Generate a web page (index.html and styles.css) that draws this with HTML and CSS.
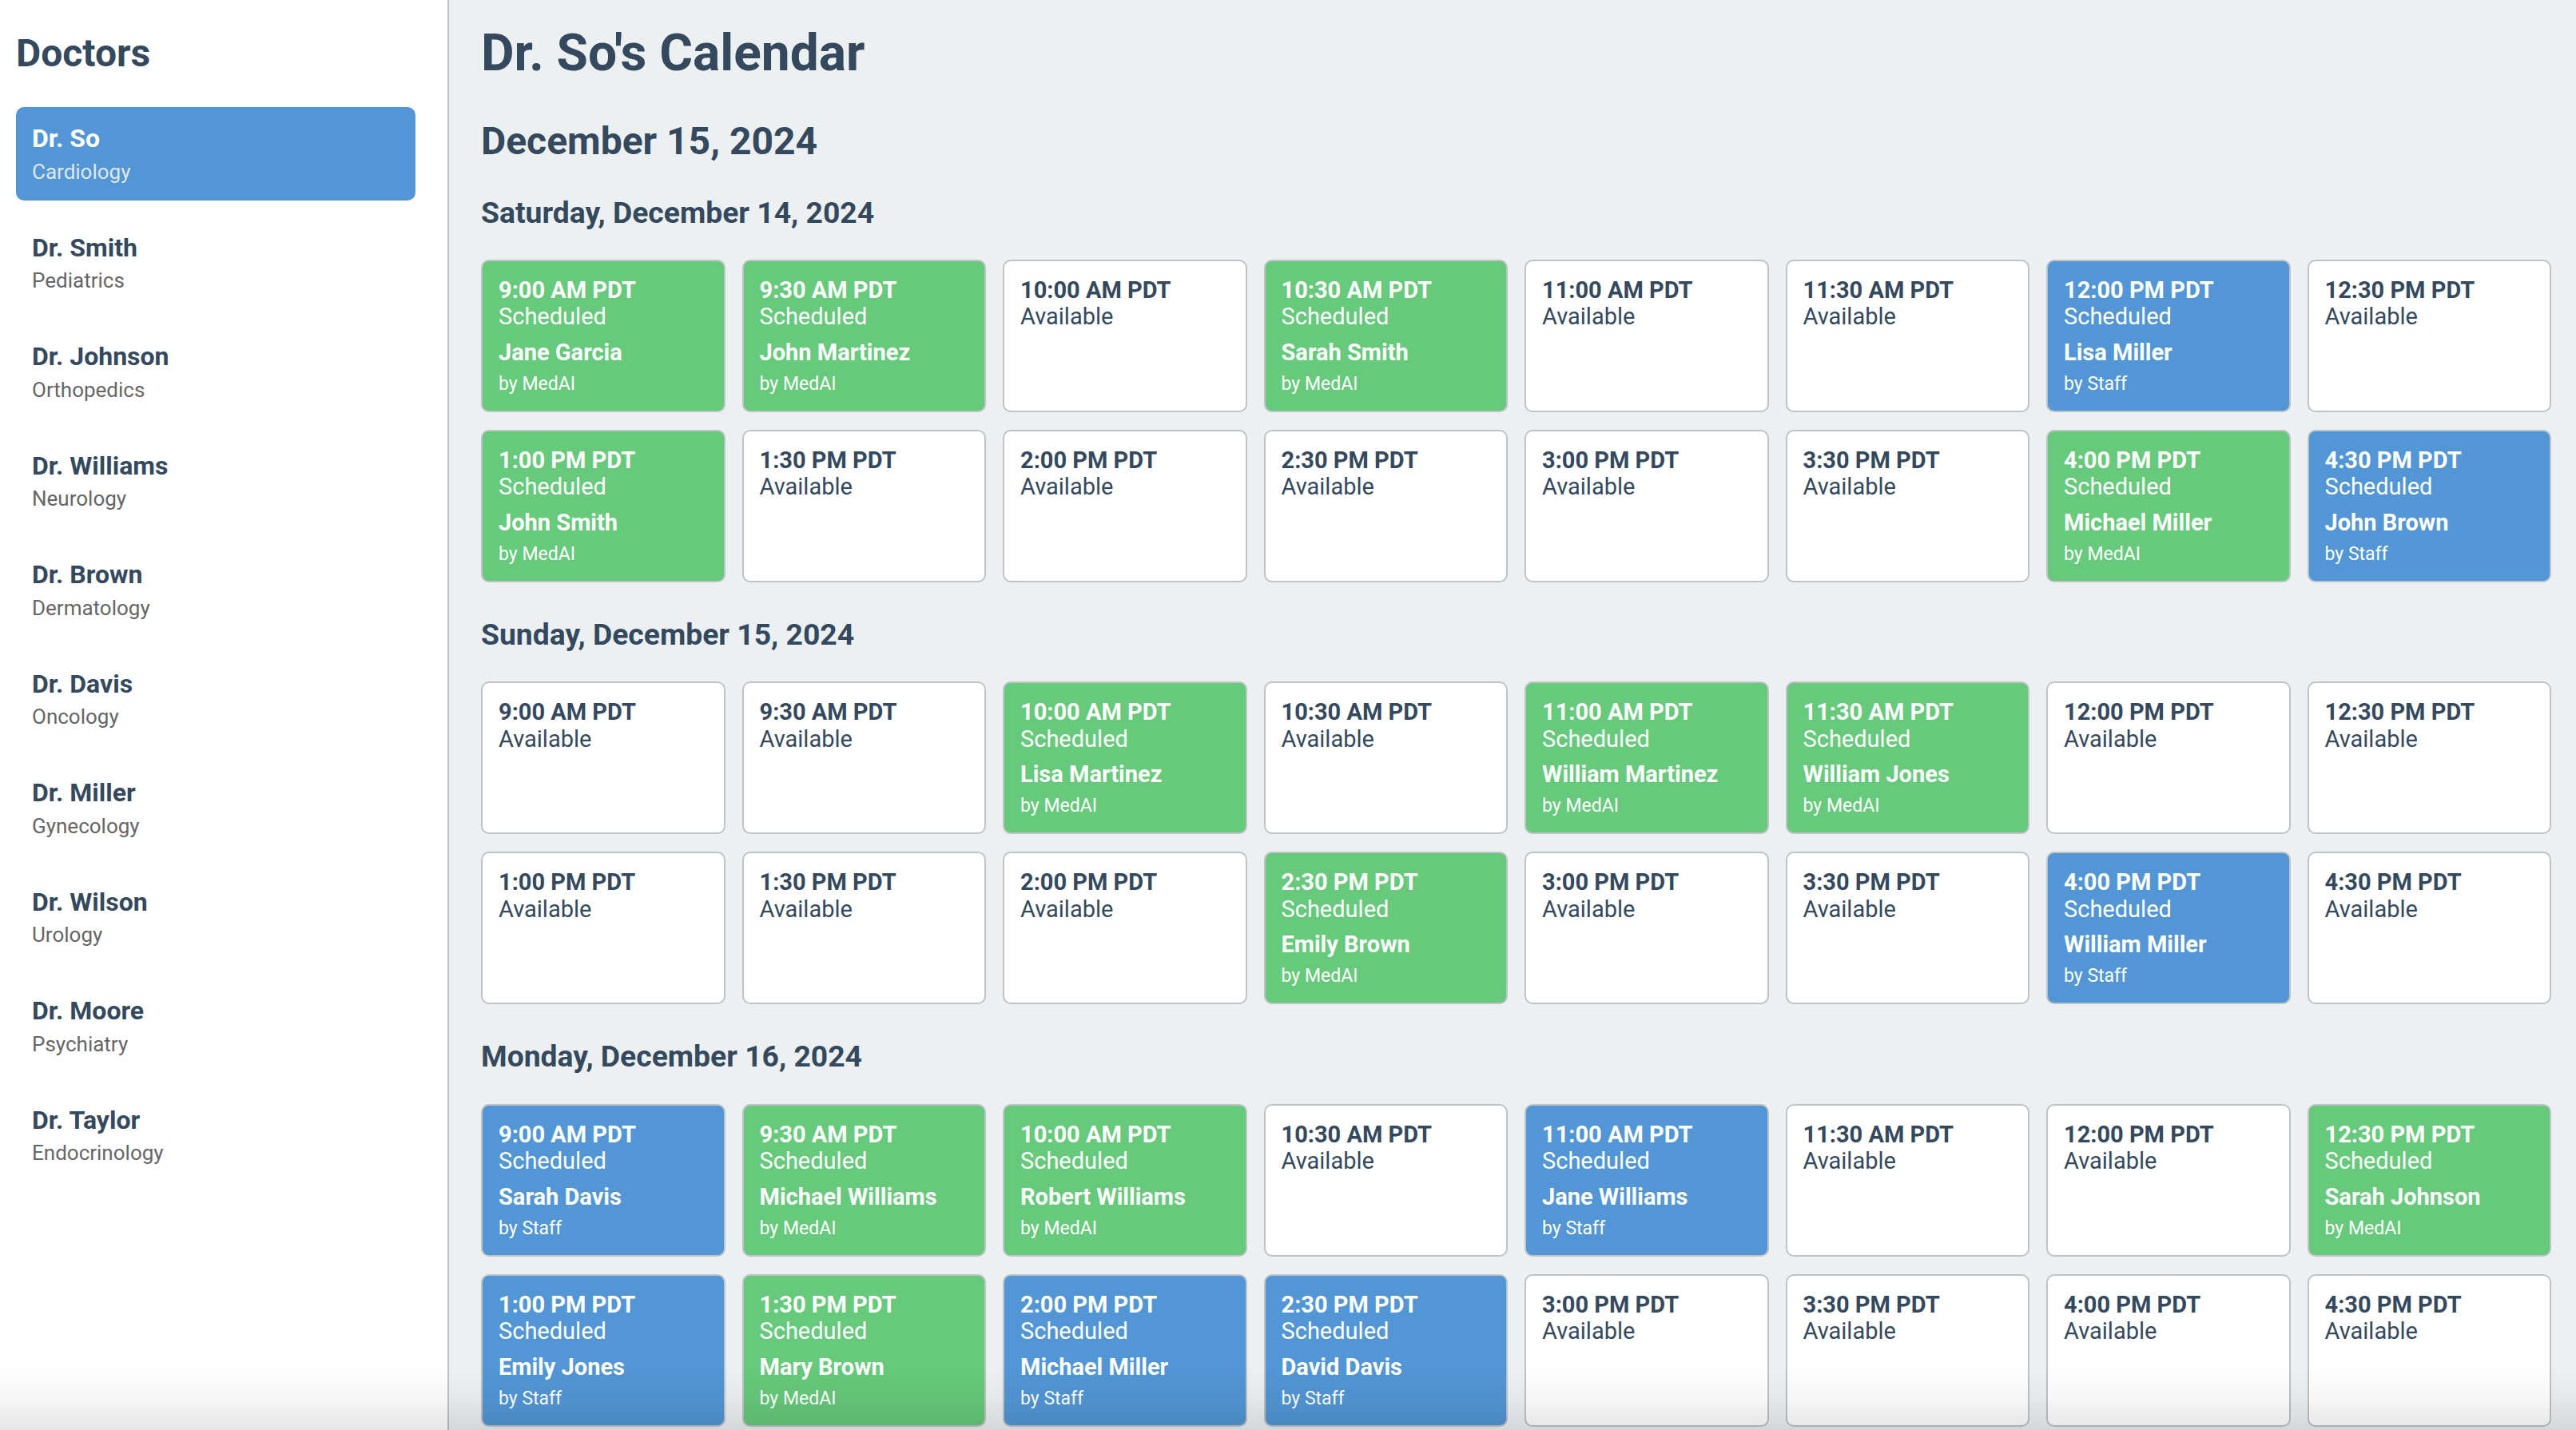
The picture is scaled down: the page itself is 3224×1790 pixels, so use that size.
FILE: index.html
```html
<!DOCTYPE html>
<html lang="en">
<head>
<meta charset="utf-8">
<title>Dr. So's Calendar</title>
<link rel="stylesheet" href="styles.css">
</head>
<body>
<div class="app">
  <aside class="sidebar">
    <h2 class="sidebar-title">Doctors</h2>
    <ul class="doctor-list">
      <li class="doctor active"><div class="doctor-name">Dr. So</div><div class="doctor-spec">Cardiology</div></li>
      <li class="doctor"><div class="doctor-name">Dr. Smith</div><div class="doctor-spec">Pediatrics</div></li>
      <li class="doctor"><div class="doctor-name">Dr. Johnson</div><div class="doctor-spec">Orthopedics</div></li>
      <li class="doctor"><div class="doctor-name">Dr. Williams</div><div class="doctor-spec">Neurology</div></li>
      <li class="doctor"><div class="doctor-name">Dr. Brown</div><div class="doctor-spec">Dermatology</div></li>
      <li class="doctor"><div class="doctor-name">Dr. Davis</div><div class="doctor-spec">Oncology</div></li>
      <li class="doctor"><div class="doctor-name">Dr. Miller</div><div class="doctor-spec">Gynecology</div></li>
      <li class="doctor"><div class="doctor-name">Dr. Wilson</div><div class="doctor-spec">Urology</div></li>
      <li class="doctor"><div class="doctor-name">Dr. Moore</div><div class="doctor-spec">Psychiatry</div></li>
      <li class="doctor"><div class="doctor-name">Dr. Taylor</div><div class="doctor-spec">Endocrinology</div></li>
    </ul>
  </aside>
  <main class="main">
    <h1 class="page-title">Dr. So's Calendar</h1>
    <h2 class="date-title">December 15, 2024</h2>

    <section class="day">
      <h3 class="day-title">Saturday, December 14, 2024</h3>
      <div class="slots">
        <div class="slot ai"><div class="time">9:00 AM PDT</div><div class="status">Scheduled</div><div class="patient">Jane Garcia</div><div class="by">by MedAI</div></div>
        <div class="slot ai"><div class="time">9:30 AM PDT</div><div class="status">Scheduled</div><div class="patient">John Martinez</div><div class="by">by MedAI</div></div>
        <div class="slot"><div class="time">10:00 AM PDT</div><div class="status">Available</div></div>
        <div class="slot ai"><div class="time">10:30 AM PDT</div><div class="status">Scheduled</div><div class="patient">Sarah Smith</div><div class="by">by MedAI</div></div>
        <div class="slot"><div class="time">11:00 AM PDT</div><div class="status">Available</div></div>
        <div class="slot"><div class="time">11:30 AM PDT</div><div class="status">Available</div></div>
        <div class="slot staff"><div class="time">12:00 PM PDT</div><div class="status">Scheduled</div><div class="patient">Lisa Miller</div><div class="by">by Staff</div></div>
        <div class="slot"><div class="time">12:30 PM PDT</div><div class="status">Available</div></div>
        <div class="slot ai"><div class="time">1:00 PM PDT</div><div class="status">Scheduled</div><div class="patient">John Smith</div><div class="by">by MedAI</div></div>
        <div class="slot"><div class="time">1:30 PM PDT</div><div class="status">Available</div></div>
        <div class="slot"><div class="time">2:00 PM PDT</div><div class="status">Available</div></div>
        <div class="slot"><div class="time">2:30 PM PDT</div><div class="status">Available</div></div>
        <div class="slot"><div class="time">3:00 PM PDT</div><div class="status">Available</div></div>
        <div class="slot"><div class="time">3:30 PM PDT</div><div class="status">Available</div></div>
        <div class="slot ai"><div class="time">4:00 PM PDT</div><div class="status">Scheduled</div><div class="patient">Michael Miller</div><div class="by">by MedAI</div></div>
        <div class="slot staff"><div class="time">4:30 PM PDT</div><div class="status">Scheduled</div><div class="patient">John Brown</div><div class="by">by Staff</div></div>
      </div>
    </section>

    <section class="day">
      <h3 class="day-title">Sunday, December 15, 2024</h3>
      <div class="slots">
        <div class="slot"><div class="time">9:00 AM PDT</div><div class="status">Available</div></div>
        <div class="slot"><div class="time">9:30 AM PDT</div><div class="status">Available</div></div>
        <div class="slot ai"><div class="time">10:00 AM PDT</div><div class="status">Scheduled</div><div class="patient">Lisa Martinez</div><div class="by">by MedAI</div></div>
        <div class="slot"><div class="time">10:30 AM PDT</div><div class="status">Available</div></div>
        <div class="slot ai"><div class="time">11:00 AM PDT</div><div class="status">Scheduled</div><div class="patient">William Martinez</div><div class="by">by MedAI</div></div>
        <div class="slot ai"><div class="time">11:30 AM PDT</div><div class="status">Scheduled</div><div class="patient">William Jones</div><div class="by">by MedAI</div></div>
        <div class="slot"><div class="time">12:00 PM PDT</div><div class="status">Available</div></div>
        <div class="slot"><div class="time">12:30 PM PDT</div><div class="status">Available</div></div>
        <div class="slot"><div class="time">1:00 PM PDT</div><div class="status">Available</div></div>
        <div class="slot"><div class="time">1:30 PM PDT</div><div class="status">Available</div></div>
        <div class="slot"><div class="time">2:00 PM PDT</div><div class="status">Available</div></div>
        <div class="slot ai"><div class="time">2:30 PM PDT</div><div class="status">Scheduled</div><div class="patient">Emily Brown</div><div class="by">by MedAI</div></div>
        <div class="slot"><div class="time">3:00 PM PDT</div><div class="status">Available</div></div>
        <div class="slot"><div class="time">3:30 PM PDT</div><div class="status">Available</div></div>
        <div class="slot staff"><div class="time">4:00 PM PDT</div><div class="status">Scheduled</div><div class="patient">William Miller</div><div class="by">by Staff</div></div>
        <div class="slot"><div class="time">4:30 PM PDT</div><div class="status">Available</div></div>
      </div>
    </section>

    <section class="day">
      <h3 class="day-title">Monday, December 16, 2024</h3>
      <div class="slots">
        <div class="slot staff"><div class="time">9:00 AM PDT</div><div class="status">Scheduled</div><div class="patient">Sarah Davis</div><div class="by">by Staff</div></div>
        <div class="slot ai"><div class="time">9:30 AM PDT</div><div class="status">Scheduled</div><div class="patient">Michael Williams</div><div class="by">by MedAI</div></div>
        <div class="slot ai"><div class="time">10:00 AM PDT</div><div class="status">Scheduled</div><div class="patient">Robert Williams</div><div class="by">by MedAI</div></div>
        <div class="slot"><div class="time">10:30 AM PDT</div><div class="status">Available</div></div>
        <div class="slot staff"><div class="time">11:00 AM PDT</div><div class="status">Scheduled</div><div class="patient">Jane Williams</div><div class="by">by Staff</div></div>
        <div class="slot"><div class="time">11:30 AM PDT</div><div class="status">Available</div></div>
        <div class="slot"><div class="time">12:00 PM PDT</div><div class="status">Available</div></div>
        <div class="slot ai"><div class="time">12:30 PM PDT</div><div class="status">Scheduled</div><div class="patient">Sarah Johnson</div><div class="by">by MedAI</div></div>
        <div class="slot staff"><div class="time">1:00 PM PDT</div><div class="status">Scheduled</div><div class="patient">Emily Jones</div><div class="by">by Staff</div></div>
        <div class="slot ai"><div class="time">1:30 PM PDT</div><div class="status">Scheduled</div><div class="patient">Mary Brown</div><div class="by">by MedAI</div></div>
        <div class="slot staff"><div class="time">2:00 PM PDT</div><div class="status">Scheduled</div><div class="patient">Michael Miller</div><div class="by">by Staff</div></div>
        <div class="slot staff"><div class="time">2:30 PM PDT</div><div class="status">Scheduled</div><div class="patient">David Davis</div><div class="by">by Staff</div></div>
        <div class="slot"><div class="time">3:00 PM PDT</div><div class="status">Available</div></div>
        <div class="slot"><div class="time">3:30 PM PDT</div><div class="status">Available</div></div>
        <div class="slot"><div class="time">4:00 PM PDT</div><div class="status">Available</div></div>
        <div class="slot"><div class="time">4:30 PM PDT</div><div class="status">Available</div></div>
      </div>
    </section>
  </main>
</div>
<div class="bottom-shade"></div>
</body>
</html>
```

FILE: styles.css
```css
* { box-sizing: border-box; }

html, body {
  margin: 0;
  height: 100%;
  overflow: hidden;
}

body {
  font-family: Roboto, "Liberation Sans", sans-serif;
  color: #34495e;
  background: #ecf0f1;
}

.app {
  display: flex;
  height: 100vh;
}

/* Sidebar */
.sidebar {
  flex: 0 0 562px;
  background: #ffffff;
  border-right: 2px solid #bdc3c7;
  padding: 20px 40px 20px 20px;
  overflow: hidden;
}

.sidebar-title {
  margin: 18px 0 39px;
  font-size: 48px;
  font-weight: 700;
  line-height: normal;
  color: #34495e;
}

.doctor-list {
  list-style: none;
  margin: 0;
  padding: 0;
  display: flex;
  flex-direction: column;
  gap: 20px;
}

.doctor {
  padding: 20px 20px 21px;
  border-radius: 10px;
}

.doctor-name {
  font-size: 32px;
  font-weight: 700;
  line-height: normal;
  color: #34495e;
}

.doctor-spec {
  margin-top: 7.5px;
  font-size: 26px;
  line-height: normal;
  color: #666666;
}

.doctor.active {
  background: #5296d5;
}

.doctor.active .doctor-name {
  color: #ffffff;
}

.doctor.active .doctor-spec {
  color: #dfe6ec;
}

/* Main */
.main {
  flex: 1 1 auto;
  min-width: 0;
  padding: 29px 31px 0 40px;
  overflow: hidden;
}

.page-title {
  margin: 0 0 44px;
  font-size: 64px;
  font-weight: 700;
  line-height: normal;
}

.date-title {
  margin: 0 0 38.5px;
  font-size: 48px;
  font-weight: 700;
  line-height: normal;
}

.day + .day {
  margin-top: 43px;
}

.day-title {
  margin: 0 0 37.5px;
  font-size: 37.3px;
  font-weight: 700;
  line-height: normal;
}

.slots {
  display: grid;
  grid-template-columns: repeat(8, 1fr);
  column-gap: 21px;
  row-gap: 22px;
}

.slot {
  background: #ffffff;
  border: 2px solid #bdc3c7;
  border-radius: 10px;
  padding: 20px 20px 19.5px;
  color: #34495e;
}

.slot.ai {
  background: #66c97b;
  color: #ffffff;
}

.slot.staff {
  background: #5296d5;
  color: #ffffff;
}

.time {
  font-size: 29px;
  font-weight: 700;
  line-height: 1.15;
}

.status {
  font-size: 29px;
  line-height: 1.15;
}

.patient {
  margin-top: 11px;
  font-size: 29px;
  font-weight: 700;
  line-height: 1.15;
}

.by {
  margin-top: 10px;
  font-size: 23px;
  line-height: 1.15;
}

/* soft shadow along the bottom edge of the window */
.bottom-shade {
  position: fixed;
  left: 0;
  right: 0;
  bottom: 0;
  height: 80px;
  pointer-events: none;
  background: linear-gradient(to bottom, rgba(0, 0, 0, 0) 0%, rgba(0, 0, 0, 0.03) 50%, rgba(0, 0, 0, 0.1) 100%);
}
```
